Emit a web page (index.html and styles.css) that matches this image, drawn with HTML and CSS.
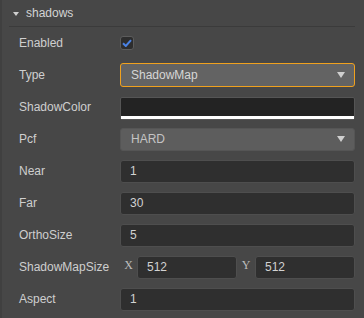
FILE: index.html
```html
<!DOCTYPE html>
<html lang="en">
<head>
  <meta charset="UTF-8">
  <meta name="viewport" content="width=device-width, initial-scale=1.0">
  <title>Shadows</title>
  <link rel="stylesheet" href="styles.css">
</head>
<body>
  <div class="panel">
    <div class="section-head">
      <span class="fold"></span>
      <span class="section-name">shadows</span>
    </div>

    <div class="prop">
      <label class="prop-name">Enabled</label>
      <div class="prop-value">
        <span class="check">
          <svg width="10" height="8" viewBox="0 0 10 8"><path d="M1 4.2 L3.8 7 L9 1.2" fill="none" stroke="#4a82e4" stroke-width="2"/></svg>
        </span>
      </div>
    </div>

    <div class="prop">
      <label class="prop-name">Type</label>
      <div class="prop-value">
        <div class="select focused">ShadowMap<span class="caret"></span></div>
      </div>
    </div>

    <div class="prop">
      <label class="prop-name">ShadowColor</label>
      <div class="prop-value">
        <div class="color"><div class="alpha"></div></div>
      </div>
    </div>

    <div class="prop">
      <label class="prop-name">Pcf</label>
      <div class="prop-value">
        <div class="select disabled">HARD<span class="caret"></span></div>
      </div>
    </div>

    <div class="prop">
      <label class="prop-name">Near</label>
      <div class="prop-value"><input class="num" type="text" value="1"></div>
    </div>

    <div class="prop">
      <label class="prop-name">Far</label>
      <div class="prop-value"><input class="num" type="text" value="30"></div>
    </div>

    <div class="prop">
      <label class="prop-name">OrthoSize</label>
      <div class="prop-value"><input class="num" type="text" value="5"></div>
    </div>

    <div class="prop">
      <label class="prop-name">ShadowMapSize</label>
      <div class="prop-value vec2">
        <span class="axis">X</span><input class="num" type="text" value="512">
        <span class="axis">Y</span><input class="num" type="text" value="512">
      </div>
    </div>

    <div class="prop">
      <label class="prop-name">Aspect</label>
      <div class="prop-value"><input class="num" type="text" value="1"></div>
    </div>
  </div>
</body>
</html>
```

FILE: styles.css
```css
/* inspector panel */
html, body {
  margin: 0;
  height: 100%;
  background: #474747;
}
body {
  font-family: "Liberation Sans", Arial, sans-serif;
  font-size: 12px;
  color: #d2d2d2;
  overflow: hidden;
}
.panel {
  padding: 0 9px 0 0;
  border-left: 2px solid #404040;
  height: 100%;
  box-sizing: border-box;
}
.section-head {
  margin-left: 7px;
  height: 26px;
  border-bottom: 1px solid #3b3b3b;
  display: flex;
  align-items: center;
  padding-left: 4px;
}
.fold {
  width: 0;
  height: 0;
  border-left: 3.5px solid transparent;
  border-right: 3.5px solid transparent;
  border-top: 4px solid #d0d0d0;
  margin-right: 7px;
  margin-top: 1px;
}
.section-name {
  color: #d4d4d4;
}
.prop {
  display: flex;
  align-items: center;
  height: 32px;
}
.prop-name {
  width: 101px;
  padding-left: 17px;
  flex: none;
  color: #cfcfcf;
}
.prop-value {
  flex: 1;
  display: flex;
  align-items: center;
}
.check {
  width: 12px;
  height: 12px;
  border: 1px solid #5c5c5c;
  border-radius: 3px;
  background: #2d2d2d;
  display: flex;
  align-items: center;
  justify-content: center;
}
.select {
  flex: 1;
  height: 22px;
  box-sizing: border-box;
  border-radius: 3px;
  display: flex;
  align-items: center;
  padding-left: 10px;
  position: relative;
}
.select.focused {
  height: 24px;
  background: #636363;
  border: 1px solid #f0a11e;
  color: #d6d6d6;
}
.select.disabled {
  height: 23px;
  background: #5d5d5d;
  border: 1px solid #555;
  color: #c4c4c4;
}
.caret {
  position: absolute;
  right: 9px;
  top: 50%;
  margin-top: -3px;
  width: 0;
  height: 0;
  border-left: 4px solid transparent;
  border-right: 4px solid transparent;
  border-top: 6px solid #cfcfcf;
}
.color {
  flex: 1;
  height: 23px;
  box-sizing: border-box;
  background: #232323;
  border: 1px solid #555;
  border-radius: 2px;
  display: flex;
  flex-direction: column;
  justify-content: flex-end;
  margin-top: 2px;
}
.alpha {
  height: 3px;
  background: #fff;
}
.num {
  flex: 1;
  min-width: 0;
  height: 23px;
  box-sizing: border-box;
  background: #2f2f2f;
  border: 1px solid #4e4e4e;
  border-radius: 3px;
  color: #d2d2d2;
  font-family: "Liberation Sans", Arial, sans-serif;
  font-size: 12px;
  padding: 0 0 0 9px;
  margin: 0;
  outline: none;
}
.vec2 .num {
  width: 100px;
  flex: none;
}
.axis {
  width: 17px;
  flex: none;
  text-align: center;
  font-family: "Liberation Serif", "Times New Roman", serif;
  font-size: 12px;
  color: #bcbcbc;
  margin-top: -3px;
}
.axis + .num + .axis {
  width: 18px;
}
```
